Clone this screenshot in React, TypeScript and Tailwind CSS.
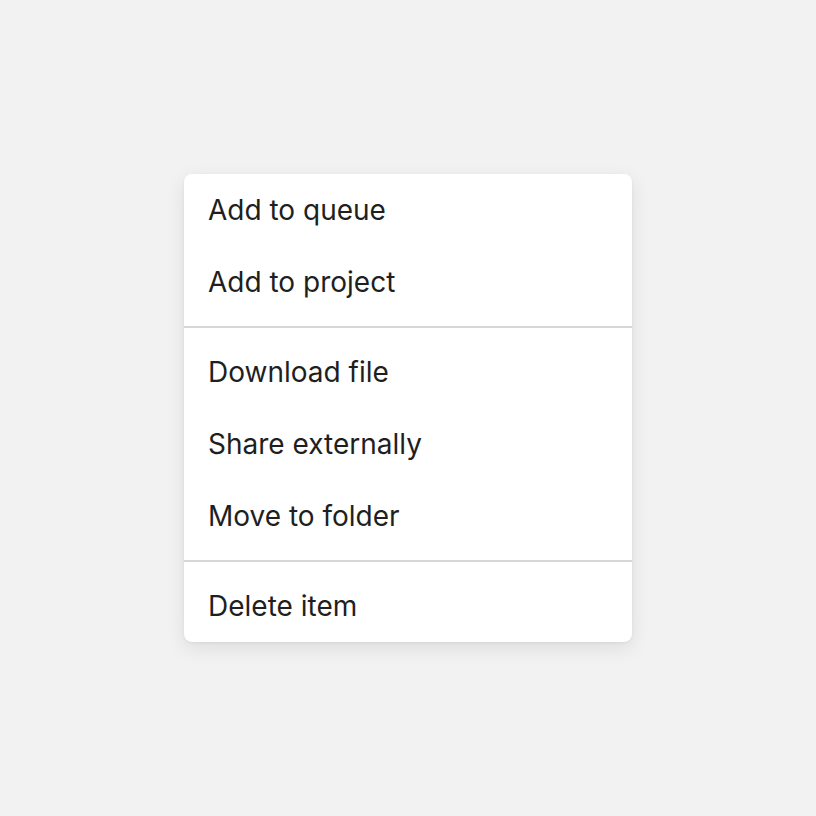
export default function App() {
  const Item = ({ label }: { label: string }) => (
    <div className="h-[72px] flex items-center pl-6 text-[28px] leading-none text-[#1f1f1f] tracking-normal">
      {label}
    </div>
  );
  const Divider = () => <div className="my-2 h-[2px] bg-[#d6d6d6]" />;
  return (
    <div
      className="w-[816px] h-[816px] bg-[#f2f2f2] flex items-center justify-center"
      style={{ fontFamily: 'Inter, "Noto Sans", sans-serif' }}
    >
      <div className="w-[448px] bg-white rounded-lg shadow-[0_6px_20px_rgba(0,0,0,0.09),0_1px_3px_rgba(0,0,0,0.06)] flex flex-col">
        <Item label="Add to queue" />
        <Item label="Add to project" />
        <Divider />
        <Item label="Download file" />
        <Item label="Share externally" />
        <Item label="Move to folder" />
        <Divider />
        <Item label="Delete item" />
      </div>
    </div>
  );
}
